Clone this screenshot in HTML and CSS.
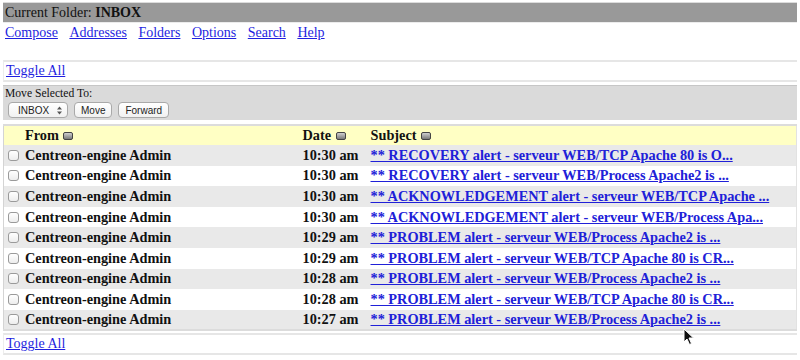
FILE: index.html
```html
<!DOCTYPE html>
<html lang="en">
<head>
    <meta charset="UTF-8">
    <title>INBOX</title>
    <link rel="stylesheet" href="styles.css">
</head>

<body>
    <div class="folder-bar">Current Folder: <b>INBOX</b></div>

    <nav class="menu">
        <a href="#">Compose</a>
        <a href="#">Addresses</a>
        <a href="#">Folders</a>
        <a href="#">Options</a>
        <a href="#">Search</a>
        <a href="#">Help</a>
    </nav>

    <div class="toggle-box top"><a href="#">Toggle All</a></div>

    <div class="move-box">
        <div class="move-label">Move Selected To:</div>
        <div class="move-controls">
            <span class="mac-btn select">INBOX
                <svg class="updown" width="5" height="9" viewBox="0 0 5 9"><path d="M0 3.5 L2.5 0.5 L5 3.5Z M0 5.5 L2.5 8.5 L5 5.5Z" fill="#555"/></svg>
            </span>
            <span class="mac-btn">Move</span>
            <span class="mac-btn">Forward</span>
        </div>
    </div>

    <table class="messages">
        <tr class="head">
            <th class="col-from">From <span class="sort"></span></th>
            <th class="col-date">Date <span class="sort"></span></th>
            <th class="col-subj">Subject <span class="sort"></span></th>
        </tr>
        <tr class="odd">
            <td class="col-from"><span class="check"></span>Centreon-engine Admin</td>
            <td class="col-date">10:30 am</td>
            <td class="col-subj"><a href="#">** RECOVERY alert - serveur WEB/TCP Apache 80 is O...</a></td>
        </tr>
        <tr>
            <td class="col-from"><span class="check"></span>Centreon-engine Admin</td>
            <td class="col-date">10:30 am</td>
            <td class="col-subj"><a href="#">** RECOVERY alert - serveur WEB/Process Apache2 is ...</a></td>
        </tr>
        <tr class="odd">
            <td class="col-from"><span class="check"></span>Centreon-engine Admin</td>
            <td class="col-date">10:30 am</td>
            <td class="col-subj"><a href="#">** ACKNOWLEDGEMENT alert - serveur WEB/TCP Apache ...</a></td>
        </tr>
        <tr>
            <td class="col-from"><span class="check"></span>Centreon-engine Admin</td>
            <td class="col-date">10:30 am</td>
            <td class="col-subj"><a href="#">** ACKNOWLEDGEMENT alert - serveur WEB/Process Apa...</a></td>
        </tr>
        <tr class="odd">
            <td class="col-from"><span class="check"></span>Centreon-engine Admin</td>
            <td class="col-date">10:29 am</td>
            <td class="col-subj"><a href="#">** PROBLEM alert - serveur WEB/Process Apache2 is ...</a></td>
        </tr>
        <tr>
            <td class="col-from"><span class="check"></span>Centreon-engine Admin</td>
            <td class="col-date">10:29 am</td>
            <td class="col-subj"><a href="#">** PROBLEM alert - serveur WEB/TCP Apache 80 is CR...</a></td>
        </tr>
        <tr class="odd">
            <td class="col-from"><span class="check"></span>Centreon-engine Admin</td>
            <td class="col-date">10:28 am</td>
            <td class="col-subj"><a href="#">** PROBLEM alert - serveur WEB/Process Apache2 is ...</a></td>
        </tr>
        <tr>
            <td class="col-from"><span class="check"></span>Centreon-engine Admin</td>
            <td class="col-date">10:28 am</td>
            <td class="col-subj"><a href="#">** PROBLEM alert - serveur WEB/TCP Apache 80 is CR...</a></td>
        </tr>
        <tr class="odd">
            <td class="col-from"><span class="check"></span>Centreon-engine Admin</td>
            <td class="col-date">10:27 am</td>
            <td class="col-subj"><a href="#">** PROBLEM alert - serveur WEB/Process Apache2 is ...</a></td>
        </tr>
    </table>

    <div class="toggle-box bottom"><a href="#">Toggle All</a></div>

    <!-- mouse pointer left in the screenshot -->
    <svg class="pointer" width="12" height="18" viewBox="0 0 12 18">
        <path d="M1 1 L1 14 L4 11 L6.5 16.5 L8.5 15.5 L6 10 L10.5 10 Z" fill="#111" stroke="#fff" stroke-width="1"/>
    </svg>
</body>
</html>
```

FILE: styles.css
```css
/* Page */
* {
    box-sizing: border-box;
}

html, body {
    height: 100%;
    overflow: hidden;
}

body {
    margin: 0;
    padding: 2px 3px 0;
    font-family: 'Liberation Serif', 'Times New Roman', serif;
    font-size: 14px;
    color: #111;
    background: #fff;
    position: relative;
}

a {
    color: #1f1fe0;
}

/* Folder bar and menu */
.folder-bar {
    background: #999;
    border-top: 1px solid #dcdcdc;
    border-bottom: 1px solid #ececec;
    height: 21px;
    line-height: 19px;
    padding: 0 2px;
}

.menu {
    display: flex;
    gap: 11.5px;
    padding: 1px 2px 0;
    line-height: 18px;
}

/* Toggle All boxes */
.toggle-box {
    border-top: 2px solid #e6e6e6;
    border-bottom: 2px solid #e6e6e6;
    border-left: 1px solid #ededed;
    height: 22px;
    line-height: 18px;
    padding: 0 2px;
}

.toggle-box.top {
    margin-top: 18px;
}

.toggle-box.bottom {
    margin-top: 2px;
}

/* Move selected */
.move-box {
    margin-top: 3px;
    background: #dadada;
    border-top: 1px solid #c6c6c6;
    height: 35px;
    padding: 1px 2px 0;
}

.move-label {
    font-size: 11.6px;
    line-height: 13px;
}

.move-controls {
    display: flex;
    gap: 6px;
    margin-top: 2px;
    padding-left: 3px;
}

.mac-btn {
    display: inline-flex;
    align-items: center;
    height: 16px;
    padding: 0 6px;
    background: linear-gradient(#ffffff, #f1f1f1);
    border: 1px solid #a9a9a9;
    border-radius: 4px;
    font-family: 'Liberation Sans', Arial, sans-serif;
    font-size: 10px;
    color: #222;
}

.mac-btn.select {
    width: 60px;
    padding-left: 9px;
    justify-content: space-between;
}

.updown {
    margin-right: -1px;
}

/* Message list */
.messages {
    width: 100%;
    margin-top: 4px;
    border-collapse: collapse;
    border-top: 2px solid #dcdcdc;
    border-bottom: 2px solid #dcdcdc;
    border-left: 1px solid #d4d4d4;
    border-right: 1px solid #e2e2e2;
    font-size: 14.3px;
    font-weight: bold;
}

.messages th,
.messages td {
    padding: 0;
    text-align: left;
    white-space: nowrap;
    vertical-align: middle;
}

.messages tr {
    height: 20.6px;
}

.messages tr.head {
    height: 20px;
    background: #ffffc4;
}

.messages tr.odd {
    background: #e9e9e9;
}

.col-from {
    width: 299px;
    padding-left: 4px !important;
}

.head .col-from {
    padding-left: 21px !important;
}

.col-date {
    width: 68px;
}

.col-subj a {
    color: #2020d8;
}

.sort {
    display: inline-block;
    width: 10px;
    height: 8px;
    margin-left: 1px;
    border: 1px solid #444;
    border-radius: 2px;
    background: linear-gradient(#cfcfcf, #7a7a7a);
    vertical-align: 0;
}

.check {
    display: inline-block;
    width: 11px;
    height: 11px;
    margin-right: 6px;
    border: 1px solid #9a9a9a;
    border-radius: 3px;
    background: linear-gradient(#fff, #ededed);
    vertical-align: -1px;
}

.pointer {
    position: absolute;
    left: 683px;
    top: 328px;
}
```
